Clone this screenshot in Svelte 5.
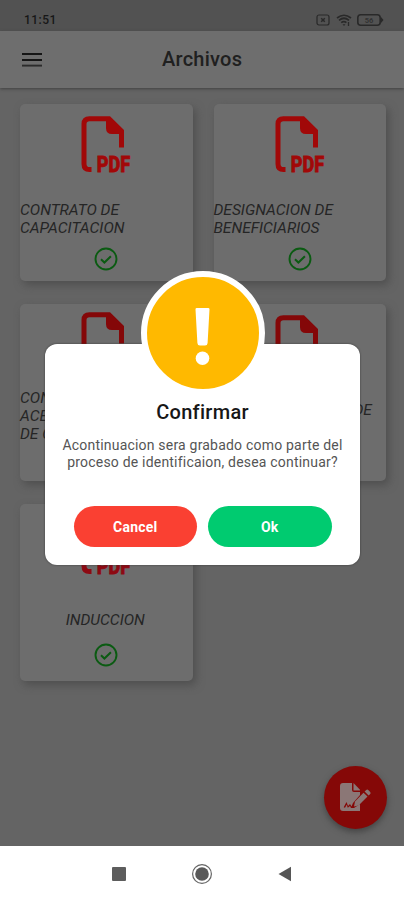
<script>
  const files = [
    { id: 1, lines: ['CONTRATO DE', 'CAPACITACION'], iconTop: 12, textTop: 97, tone: '#a10808' },
    { id: 2, lines: ['DESIGNACION DE', 'BENEFICIARIOS'], iconTop: 12, textTop: 97, tone: '#a10808' },
    { id: 3, lines: ['CONSTANCIA DE', 'ACEPTACION', 'DE CAPACITACION'], iconTop: 8, textTop: 85, tone: '#840708' },
    { id: 4, lines: ['CONSENTIMIENTOS DE', 'GRABACION'], iconTop: 11, textTop: 97, tone: '#840708' },
    { id: 5, lines: ['INDUCCION'], iconTop: 14, textTop: 107, tone: '#8d0912', center: true }
  ];
</script>

<div class="screen">
  <header class="status">
    <span class="time">11:51</span>
    <div class="indicators">
      <svg width="14" height="12" viewBox="0 0 14 12"><rect x="1" y="1" width="12" height="10" rx="2" fill="none" stroke="#292929" stroke-width="1.2"/><path d="M5.2 4.2l3.6 3.6M8.8 4.2L5.2 7.8" stroke="#292929" stroke-width="1.5"/></svg>
      <svg width="16" height="13" viewBox="0 0 16 13" fill="none" stroke="#292929" stroke-width="1.7"><path d="M1 4Q8-1.5 15 4M3 6.3Q8 2.2 13 6.3M5.2 8.6Q8 6.5 10.4 8.6"/><path d="M6.5 10.2h3L8 12z" fill="#292929" stroke="none"/><path d="M12.5 8v4" stroke-width="1.3"/></svg>
      <svg width="27" height="12" viewBox="0 0 27 12"><rect x=".8" y=".8" width="22.4" height="10.4" rx="3" fill="none" stroke="#292929" stroke-width="1.6"/><path d="M24 3l2.5 3-2.5 3z" fill="#292929"/><text x="12" y="8.8" text-anchor="middle" font-size="7.5" font-weight="700" fill="#333">56</text></svg>
    </div>
  </header>

  <nav class="appbar">
    <svg class="menu" width="20" height="14" viewBox="0 0 20 14" stroke="#151515" stroke-width="1.9"><path d="M0 1h20M0 7h20"/><path d="M0 12.6h20" stroke="#2b2b2b"/></svg>
    <h1>Archivos</h1>
  </nav>

  <main>
    <div class="grid">
      {#each files as file (file.id)}
        <article class="card" class:center={file.center} style="--icon-top: {file.iconTop}px; --text-top: {file.textTop}px; --tone: {file.tone}">
          <svg class="pdf" width="51" height="57" viewBox="0 0 51 57">
            <path d="M10.5 53.6H8.5Q3 53.6 3 48V8Q3 2.7 8.5 2.7H28L40.5 15V31.5" fill="none" stroke="var(--tone)" stroke-width="5"/>
            <path d="M25 2h5L43 15v3H31q-6 0-6-6z" fill="var(--tone)"/>
            <text x="15.8" y="55.6" font-size="22.5" font-weight="800" textLength="33.5" lengthAdjust="spacingAndGlyphs" fill="var(--tone)" stroke="var(--tone)" stroke-width=".8">PDF</text>
          </svg>
          <p>{#each file.lines as line}<span>{line}</span>{/each}</p>
          <svg class="check" width="24" height="24" viewBox="0 0 24 24" fill="none" stroke="#0b5b12"><circle cx="12" cy="12" r="10.5" stroke-width="1.9"/><path d="M7 12.2l3.4 3.3 6.5-6.3" stroke-width="2"/></svg>
        </article>
      {/each}
    </div>
    <button class="fab" aria-label="Firmar">
      <svg width="32" height="29" viewBox="0 0 32 29">
        <path d="M3 0H12V7Q12 9 14 9H20V12L13 20 11.5 23.5 10 21 8 23 6.5 19 3.7 24.2 5 24.7 6.7 21.8 7.8 24.7 10 23 11 25H14L20 21V28H3Q0 28 0 25V3Q0 0 3 0Z" fill="#8b7776"/>
        <path d="M13.5 0L20 6.8V7.4H13.5Z" fill="#8b7776"/>
        <path d="M14 23.5L15 18.5 23.5 9.7 27.5 13.4 18.5 22.5ZM24.6 8.6L26 7.2Q27.2 6 28.5 7.2L30.2 9Q31.2 10.3 30 11.3L28.6 12.5Z" fill="#8b7776"/>
      </svg>
    </button>
  </main>

  <footer>
    <svg width="14" height="14"><rect width="14" height="14" rx="1" fill="#5d5d5d"/></svg>
    <svg width="22" height="22" viewBox="0 0 22 22"><circle cx="11" cy="11" r="9.4" fill="none" stroke="#656565" stroke-width="1.2"/><circle cx="11" cy="11" r="6.8" fill="#595959"/></svg>
    <svg width="14" height="16" viewBox="0 0 14 16"><path d="M.5 8L13 .7v14.6z" fill="#565656"/></svg>
  </footer>

  <div class="dialog" role="dialog" aria-labelledby="title">
    <div class="badge">
      <svg width="20" height="60" viewBox="0 0 20 60" fill="#fff"><path d="M2.5 6.2Q2.5 5 3.8 5H15.2Q16.5 5 16.5 6.2L14.6 40Q14.5 42.5 12 42.5H7Q4.5 42.5 4.4 40Z"/><circle cx="9.5" cy="55.3" r="6.8"/></svg>
    </div>
    <h2 id="title">Confirmar</h2>
    <p class="message"><span>Acontinuacion sera grabado como parte del</span><span>proceso de identificaion, desea continuar?</span></p>
    <div class="actions">
      <button class="cancel">Cancel</button>
      <button class="ok">Ok</button>
    </div>
  </div>
</div>

<style>
  :global(body) { margin: 0; }
  .screen { position: relative; width: 404px; height: 900px; display: flex; flex-direction: column; overflow: hidden; background: #646464; font-family: Roboto, sans-serif; }
  svg { display: block; flex: none; overflow: visible; }
  button { border: 0; padding: 0; font: inherit; }
  .status { height: 31px; box-sizing: border-box; padding: 9px 20px 0 24px; display: flex; justify-content: space-between; background: #525252; }
  .time { font-size: 12px; line-height: 23px; font-weight: 500; letter-spacing: .45px; color: #171717; }
  .indicators { display: flex; align-items: center; gap: 5.5px; height: 22px; }
  .appbar { position: relative; z-index: 1; height: 57px; box-sizing: border-box; padding-left: 22px; display: flex; align-items: center; background: #6e6e6e; box-shadow: 0 1px 3px #404040; }
  h1 { margin: -2px 0 0 120px; font-size: 20px; line-height: 24px; font-weight: 500; letter-spacing: .25px; color: #202020; }
  main { height: 758px; display: flex; flex-direction: column; justify-content: space-between; }
  .grid { display: grid; grid-template-columns: repeat(2, 172.5px); grid-auto-rows: 177px; gap: 23px 21px; padding: 16px 0 0 20px; }
  .card { display: grid; grid-template: 177px / 100%; border-radius: 5px; background: #6d6d6d; box-shadow: 3px 4px 9px #4f4f4f; }
  .card > * { grid-area: 1 / 1; }
  .pdf { margin: var(--icon-top) 0 0 61px; }
  .card p { margin: var(--text-top) 0 0; font-size: 15.5px; line-height: 18px; font-style: italic; font-weight: 400; color: #252525; }
  .card span { display: block; white-space: nowrap; }
  .center p { text-align: center; padding-right: 2px; }
  .check { align-self: end; margin: 0 0 10px 74px; }
  .center .check { margin-bottom: 14px; }
  .fab { align-self: flex-end; display: flex; align-items: center; justify-content: center; width: 63px; height: 63px; margin: 0 17px 17px 0; border-radius: 50%; background: #850807; box-shadow: 0 3px 6px #444; }
  footer { height: 54px; box-sizing: border-box; background: #fff; display: flex; align-items: center; padding: 1px 0 0 112px; gap: 65px; }
  .dialog { position: absolute; left: 45px; top: 344px; width: 315px; height: 221px; border-radius: 12px; background: #fff; display: flex; flex-direction: column; align-items: center; box-shadow: 0 0 2px #333; }
  .badge { flex: none; width: 112px; height: 112px; border: 6px solid #fff; border-radius: 50%; margin-top: -73px; background: #ffb900; display: flex; align-items: center; justify-content: center; }
  h2 { margin: 5px 0 0; font-size: 20px; line-height: 24px; font-weight: 500; letter-spacing: .3px; color: #171717; }
  .message { margin: 13px 0 0; font-size: 14px; line-height: 17px; letter-spacing: .2px; color: #555; text-align: center; }
  .message span { display: block; white-space: nowrap; }
  .actions { display: flex; gap: 11px; margin-top: 35px; }
  .actions button { width: 123.5px; height: 41px; border-radius: 21px; color: #fff; font-size: 14px; font-weight: 700; letter-spacing: .2px; }
  .cancel { background: #fa4032; }
  .ok { background: #00cb70; }
</style>
